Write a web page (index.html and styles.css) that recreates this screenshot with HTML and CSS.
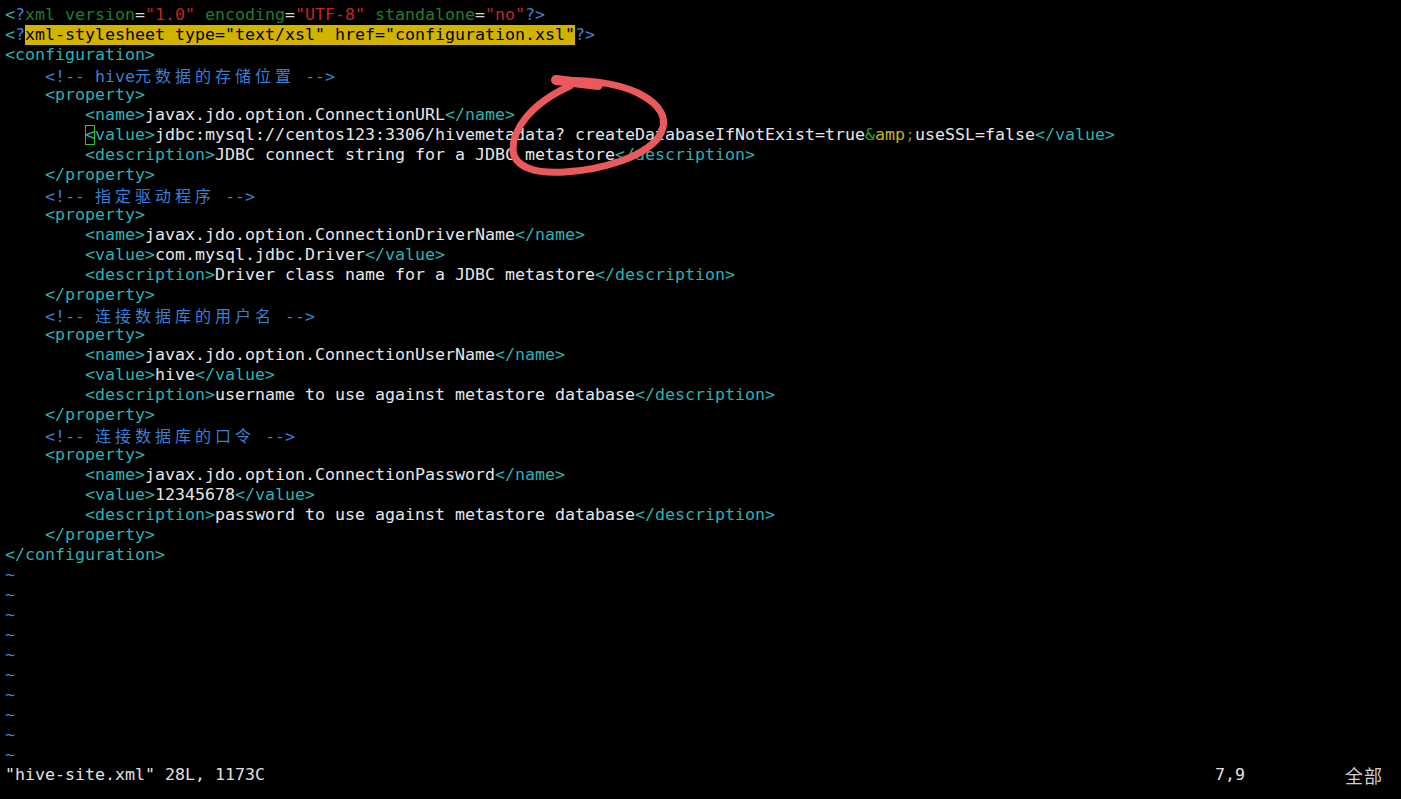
FILE: index.html
```html
<!DOCTYPE html>
<html>
<head>
<meta charset="utf-8">
<link rel="stylesheet" href="styles.css">
</head>
<body>
<div class="term">
<div class="ln"><span class="tg">&lt;</span><span class="pd">?</span><span class="at">xml version</span><span class="eq">=</span><span class="st">"1.0"</span><span class="at"> encoding</span><span class="eq">=</span><span class="st">"UTF-8"</span><span class="at"> standalone</span><span class="eq">=</span><span class="st">"no"</span><span class="pd">?&gt;</span></div>
<div class="ln"><span class="tg">&lt;</span><span class="pd">?</span><span class="hl">xml-stylesheet type="text/xsl" href="configuration.xsl"</span><span class="pd">?&gt;</span></div>
<div class="ln"><span class="tg">&lt;configuration&gt;</span></div>
<div class="ln">    <span class="cm">&lt;!-- hive<span class="cj">元数据的存储位置</span> --&gt;</span></div>
<div class="ln">    <span class="tg">&lt;property&gt;</span></div>
<div class="ln">        <span class="tg">&lt;name&gt;</span>javax.jdo.option.ConnectionURL<span class="tg">&lt;/name&gt;</span></div>
<div class="ln">        <span class="cur"><span class="tg">&lt;</span></span><span class="tg">value&gt;</span>jdbc:mysql://centos123:3306/hivemetadata? createDatabaseIfNotExist=true<span class="amp">&amp;</span><span class="ent">amp</span><span class="semi">;</span>useSSL=false<span class="tg">&lt;/value&gt;</span></div>
<div class="ln">        <span class="tg">&lt;description&gt;</span>JDBC connect string for a JDBC metastore<span class="tg">&lt;/description&gt;</span></div>
<div class="ln">    <span class="tg">&lt;/property&gt;</span></div>
<div class="ln">    <span class="cm">&lt;!-- <span class="cj">指定驱动程序</span> --&gt;</span></div>
<div class="ln">    <span class="tg">&lt;property&gt;</span></div>
<div class="ln">        <span class="tg">&lt;name&gt;</span>javax.jdo.option.ConnectionDriverName<span class="tg">&lt;/name&gt;</span></div>
<div class="ln">        <span class="tg">&lt;value&gt;</span>com.mysql.jdbc.Driver<span class="tg">&lt;/value&gt;</span></div>
<div class="ln">        <span class="tg">&lt;description&gt;</span>Driver class name for a JDBC metastore<span class="tg">&lt;/description&gt;</span></div>
<div class="ln">    <span class="tg">&lt;/property&gt;</span></div>
<div class="ln">    <span class="cm">&lt;!-- <span class="cj">连接数据库的用户名</span> --&gt;</span></div>
<div class="ln">    <span class="tg">&lt;property&gt;</span></div>
<div class="ln">        <span class="tg">&lt;name&gt;</span>javax.jdo.option.ConnectionUserName<span class="tg">&lt;/name&gt;</span></div>
<div class="ln">        <span class="tg">&lt;value&gt;</span>hive<span class="tg">&lt;/value&gt;</span></div>
<div class="ln">        <span class="tg">&lt;description&gt;</span>username to use against metastore database<span class="tg">&lt;/description&gt;</span></div>
<div class="ln">    <span class="tg">&lt;/property&gt;</span></div>
<div class="ln">    <span class="cm">&lt;!-- <span class="cj">连接数据库的口令</span> --&gt;</span></div>
<div class="ln">    <span class="tg">&lt;property&gt;</span></div>
<div class="ln">        <span class="tg">&lt;name&gt;</span>javax.jdo.option.ConnectionPassword<span class="tg">&lt;/name&gt;</span></div>
<div class="ln">        <span class="tg">&lt;value&gt;</span>12345678<span class="tg">&lt;/value&gt;</span></div>
<div class="ln">        <span class="tg">&lt;description&gt;</span>password to use against metastore database<span class="tg">&lt;/description&gt;</span></div>
<div class="ln">    <span class="tg">&lt;/property&gt;</span></div>
<div class="ln"><span class="tg">&lt;/configuration&gt;</span></div>
<div class="ln nt">~</div>
<div class="ln nt">~</div>
<div class="ln nt">~</div>
<div class="ln nt">~</div>
<div class="ln nt">~</div>
<div class="ln nt">~</div>
<div class="ln nt">~</div>
<div class="ln nt">~</div>
<div class="ln nt">~</div>
<div class="ln nt">~</div>
<div class="ln status"><span class="msg">"hive-site.xml" 28L, 1173C</span><span class="pos">7,9</span><span class="all">全部</span></div>
</div>
<svg class="mark" width="1401" height="799" viewBox="0 0 1401 799">
  <path d="M556 80 L598 85" stroke="#ea5a5c" stroke-width="10" stroke-linecap="round" fill="none"/>
  <path d="M557 81 C582 79, 615 82, 638 93 C660 104, 671 119, 658 138 C642 158, 600 170, 565 172 C535 174, 515 167, 513 151 C512 130, 530 104, 570 86" stroke="#ea5a5c" stroke-width="7" stroke-linecap="round" stroke-linejoin="round" fill="none"/>
</svg>
</body>
</html>
```

FILE: styles.css
```css
html, body {
  margin: 0;
  padding: 0;
  background: #000;
  overflow: hidden;
}

body {
  width: 1401px;
  height: 799px;
  position: relative;
}

.term {
  padding: 5px 0 0 5px;
  font-family: "DejaVu Sans Mono", "Liberation Mono", monospace;
  font-size: 16.61px;
  color: #e6e6e6;
}

.ln {
  height: 20px;
  line-height: 20px;
  white-space: pre;
}

.tg { color: #2cb1b1; }
.pd { color: #3d82d6; }
.at { color: #1f7d2e; }
.eq { color: #d8d8d8; }
.st { color: #c42424; }
.cm { color: #3b7fd4; }
.amp { color: #2f9a2f; }
.ent { color: #c9b22a; }
.semi { color: #8a7a1e; }

.hl {
  background: #d2b400;
  color: #000;
  display: inline-block;
  height: 20px;
  vertical-align: top;
}

.cj {
  font-family: "Noto Sans CJK SC", sans-serif;
  font-size: 16px;
  letter-spacing: 4px;
}

.cur {
  display: inline-block;
  width: 10px;
  height: 20px;
  vertical-align: top;
  box-shadow: inset 0 0 0 1px #37c037;
}

.nt { color: #3f86d8; }

.status { display: flex; color: #e0e0e0; }
.msg { width: 1210px; }
.pos { width: 130px; }
.all {
  color: #cfcfcf;
  font-family: "Noto Sans CJK SC", sans-serif;
  font-size: 18px;
  letter-spacing: 1px;
}

.mark {
  position: absolute;
  top: 0;
  left: 0;
  pointer-events: none;
}
```
